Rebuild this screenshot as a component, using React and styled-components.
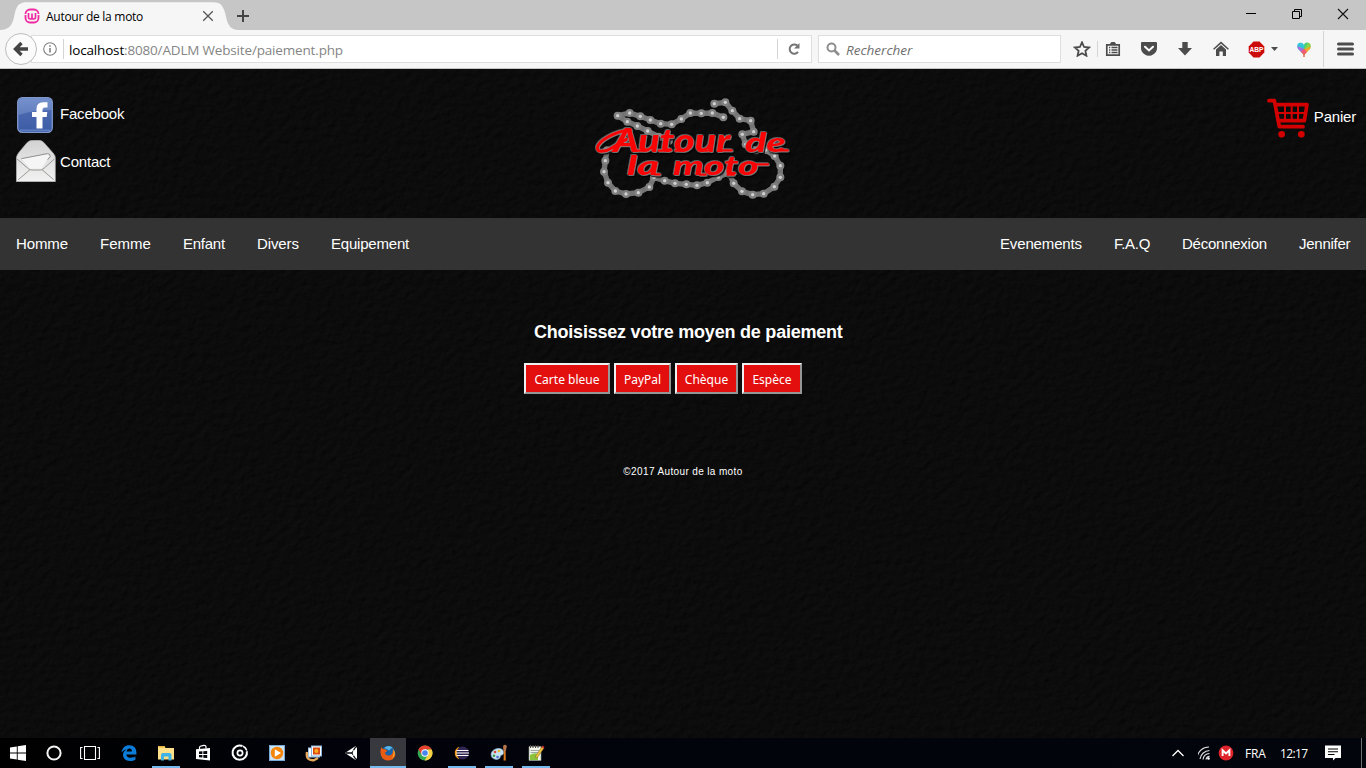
import React from 'react';
import styled, { createGlobalStyle } from 'styled-components';

const GlobalStyle = createGlobalStyle`
  * { box-sizing: border-box; }
  body { margin: 0; background: #0b0b0b; overflow: hidden; }
  svg { display: block; flex: none; }
`;

const ui = `"Open Sans", "Noto Sans", sans-serif`;
const arial = `"Liberation Sans", Arial, sans-serif`;

const Screen = styled.div`
  width: 1366px;
  height: 768px;
  display: flex;
  flex-direction: column;
`;

/* ---------- browser ---------- */
const TabStrip = styled.div`
  height: 30px;
  display: flex;
  background: #c6c6c6;
`;
const Tab = styled.div`
  position: relative;
  width: 236px;
  height: 30px;
  display: flex;
  align-items: center;
  padding: 2px 0 0 24px;
`;
const TabShape = styled.svg`
  position: absolute;
  left: 0;
  top: 0;
`;
const TabTitle = styled.span`
  position: relative;
  width: 155px;
  margin-left: 6px;
  font: 12px ${ui};
  letter-spacing: -0.27px;
  color: #000;
  white-space: nowrap;
`;
const Raised = styled.span`
  position: relative;
  display: block;
`;
const WindowButtons = styled.div`
  display: flex;
  margin-left: auto;
`;
const WindowButton = styled.div`
  width: 46px;
  height: 28px;
  display: flex;
  align-items: center;
  justify-content: center;
`;
const NavBar = styled.div`
  height: 39px;
  display: flex;
  align-items: center;
  background: #f6f6f6;
  border-bottom: 1px solid #c4c4c4;
  padding-left: 5px;
`;
const BackButton = styled.div`
  width: 32px;
  height: 32px;
  border: 1px solid #bdbdbd;
  border-radius: 50%;
  background: #fbfbfb;
  display: flex;
  align-items: center;
  justify-content: center;
  z-index: 1;
`;
const Field = styled.div`
  height: 28px;
  width: ${(p) => p.$width}px;
  margin-left: ${(p) => p.$gap}px;
  padding-left: ${(p) => p.$pad}px;
  display: flex;
  align-items: center;
  background: #fff;
  border: 1px solid #dedede;
`;
const Divider = styled.span`
  width: 1px;
  height: ${(p) => p.$height}px;
  margin: 0 ${(p) => p.$right}px 0 ${(p) => p.$left}px;
  background: #d4d4d4;
`;
const Url = styled.span`
  padding-top: 1px;
  font: 13.5px ${ui};
  letter-spacing: -0.17px;
  color: #858585;
  white-space: nowrap;
  b { font-weight: 400; color: #000; }
`;
const Placeholder = styled.span`
  padding-top: 1px;
  margin-left: 6px;
  font: italic 13.5px ${ui};
  letter-spacing: 0;
  color: #6f6f6f;
`;
const Tools = styled.div`
  flex: 1;
  height: 38px;
  display: flex;
  align-items: center;
  padding-left: 12px;
`;
const Tool = styled.div`
  width: ${(p) => p.$width}px;
  display: flex;
  justify-content: center;
`;

/* ---------- page ---------- */
const Page = styled.main`
  position: relative;
  height: 669px;
  display: flex;
  flex-direction: column;
  font-family: ${arial};
  color: #fff;
`;
const Texture = styled.svg`
  position: absolute;
  inset: 0;
`;
const Header = styled.header`
  position: relative;
  height: 149px;
  display: flex;
`;
const Links = styled.div`
  width: 585px;
  padding: 28px 0 0 16px;
`;
const IconLink = styled.a`
  display: flex;
  align-items: center;
  gap: 4px;
  height: ${(p) => p.$height}px;
  margin-bottom: ${(p) => p.$after || 0}px;
  font-size: 15px;
  line-height: 18px;
  letter-spacing: -0.2px;
  color: #fff;
`;
const LinkText = styled.span`
  padding: ${(p) => p.$down || 0}px 0 ${(p) => p.$up || 0}px;
`;
const LogoBox = styled.div`
  padding-top: 21px;
`;
const LogoWords = styled.g`
  filter: drop-shadow(2.5px 2.5px 0 #9a9a9a) drop-shadow(-2px -2px 0 #8c8c8c) drop-shadow(3px 4px 1px #000);
`;
const Cart = styled.div`
  flex: 1;
  display: flex;
  justify-content: flex-end;
  padding: 28px 10px 0 0;
`;
const Menu = styled.nav`
  position: relative;
  height: 52px;
  display: flex;
  align-items: center;
  padding: 0 16px;
  gap: 32px;
  background: #333;
`;
const MenuItem = styled.a`
  width: ${(p) => p.$width}px;
  font-size: 15px;
  line-height: 22px;
  letter-spacing: ${(p) => p.$spacing || 0}px;
  white-space: nowrap;
`;
const Spacer = styled.span`
  flex: 1;
`;
const Payment = styled.section`
  position: relative;
  padding: 51px 0 0 524px;
`;
const Title = styled.h3`
  margin: 0 0 20px 10px;
  font-size: 18px;
  line-height: 22px;
  height: 22px;
  letter-spacing: -0.22px;
  white-space: nowrap;
`;
const Choices = styled.div`
  display: flex;
  gap: 4px;
`;
const Choice = styled.button`
  width: ${(p) => p.$width}px;
  height: 31px;
  padding: 2px 0 0;
  border: 2px solid;
  border-color: #f0f0f0 #969696 #969696 #f0f0f0;
  background: #e30f0f;
  color: #fff;
  font: 12px "Noto Sans", sans-serif;
  white-space: nowrap;
`;
const Footer = styled.footer`
  position: relative;
  margin-top: 71px;
  text-align: center;
  font-size: 10px;
  line-height: 14px;
  letter-spacing: 0.37px;
`;

/* ---------- taskbar ---------- */
const Taskbar = styled.div`
  height: 30px;
  display: flex;
  background: linear-gradient(90deg, #000 0%, #02030a 25%, #02040b 60%, #03050c 100%);
`;
const Slot = styled.div`
  width: 36px;
  height: 30px;
  margin-right: ${(p) => p.$after || 0}px;
  display: flex;
  align-items: center;
  justify-content: center;
  background: ${(p) => (p.$active ? '#37393e' : 'transparent')};
  box-shadow: ${(p) => (p.$active ? 'inset 0 -2px #76b9ed' : 'none')};
  position: relative;
`;
const Running = styled.span`
  position: absolute;
  left: 4px;
  bottom: 0;
  width: 28px;
  height: 2px;
  background: #76b9ed;
`;
const Tray = styled.div`
  margin-left: auto;
  width: 196px;
  display: flex;
  align-items: center;
  font: 12px ${ui};
  color: #fff;
`;
const TrayText = styled.span`
  width: ${(p) => p.$width}px;
  letter-spacing: ${(p) => p.$spacing}px;
`;
const DesktopEdge = styled.span`
  width: 1px;
  height: 30px;
  margin-left: 19px;
  background: #6b6d70;
`;

const CHAINS = [
  [[415, 82], [382, 69], [349, 70], [316, 69], [289, 87], [260, 103], [227, 101], [196, 90], [166, 79], [134, 69], [98, 77], [127, 95], [157, 108], [188, 123], [221, 140], [252, 152]],
  [[388, 41], [421, 37], [442, 62], [464, 86], [497, 92], [506, 125], [472, 133], [482, 163], [512, 181], [542, 180], [569, 198], [586, 227], [586, 262], [568, 290], [536, 311], [503, 314], [471, 304], [446, 280], [434, 252]],
  [[66, 181], [61, 212], [57, 245], [69, 278], [91, 303], [123, 312], [160, 308], [193, 291], [207, 262], [239, 272], [270, 280], [304, 283], [336, 286], [367, 278], [400, 261], [428, 249]],
];

const Logo = () => (
  <svg width="215" height="120" viewBox="0 0 645 360">
    {CHAINS.map((c, i) => (
      <g key={i}>
        <polyline points={c.join(' ')} fill="none" stroke="#747474" strokeWidth="16" strokeLinejoin="round" />
        {c.map(([x, y]) => (
          <g key={`${x}-${y}`}>
            <circle cx={x} cy={y} r="12" fill="#808080" />
            <circle cx={x} cy={y} r="5" fill="#d0d0d0" />
          </g>
        ))}
      </g>
    ))}
    <LogoWords>
      <text fontFamily="Lato, sans-serif" fontWeight="900" fontStyle="italic" fill="#f80404">
        <tspan x="84" y="185" fontSize="94" textLength="352" lengthAdjust="spacingAndGlyphs">Autour</tspan>
        <tspan x="480" y="185" fontSize="82" textLength="122" lengthAdjust="spacingAndGlyphs">de</tspan>
        <tspan x="126" y="256" fontSize="78" textLength="96" lengthAdjust="spacingAndGlyphs">la</tspan>
        <tspan x="264" y="256" fontSize="78" textLength="256" lengthAdjust="spacingAndGlyphs">moto</tspan>
      </text>
      <path d="M136 119 C90 124 40 152 37 174 C36 188 60 186 76 176 L124 148" fill="none" stroke="#f80404" strokeWidth="9" strokeLinecap="round" />
      <path d="M408 181 H440 M585 181 H608 M505 223 H549 M210 253 H224 M150 182 H172 M222 182 H238 M272 182 H286 M350 182 H366 M345 254 H362 M428 254 H446" fill="none" stroke="#f80404" strokeWidth="7" strokeLinecap="round" />
    </LogoWords>
  </svg>
);

const FacebookIcon = () => (
  <svg width="40" height="36" viewBox="0 0 40 36">
    <defs>
      <linearGradient id="fb" x1="0" y1="0" x2="0" y2="1">
        <stop offset="0" stopColor="#5f7fc4" /><stop offset=".45" stopColor="#4866ae" /><stop offset="1" stopColor="#3c5ca6" />
      </linearGradient>
    </defs>
    <rect x="1.7" y=".7" width="34.6" height="34.6" rx="4.5" fill="url(#fb)" stroke="#8198cc" strokeWidth="1.3" />
    <path d="M2.5 5 Q2.5 1.5 6 1.5 H32 Q35.5 1.5 35.5 5 V13 Q18 13 2.5 18Z" fill="#a9bce6" opacity=".3" />
    <path d="M20.5 31.5 V20 H16 V15 H20.5 V12 Q20.5 5.2 27 5.2 H31.5 V10.4 H29 Q26.5 10.4 26.5 13 V15 H31.3 L30.7 20 H26.5 V31.5Z" fill="#fff" />
    <path d="M4 33.2 H34" stroke="#8ba8df" strokeWidth="1.3" opacity=".5" />
  </svg>
);

const MailIcon = () => (
  <svg width="40" height="42" viewBox="0 0 120 126">
    <defs>
      <linearGradient id="mail" x1="0" y1="0" x2="0" y2="1">
        <stop offset="0" stopColor="#d2d2d2" /><stop offset="1" stopColor="#f2f2f2" />
      </linearGradient>
    </defs>
    <path d="M1 53 Q2 46 8 38 L33 8 Q41 1 50 1 H71 Q78 2 84 8 L112 40 Q118 47 118 54 V125 H1Z" fill="url(#mail)" stroke="#aaa" strokeWidth="2" />
    <path d="M16 56 L94 41 Q101 40 101 48 L76 86 H42Z" fill="#f5f5f5" />
    <path d="M16 56 L94 41 Q101 40 103 49 L95 59" fill="none" stroke="#8e8e8e" strokeWidth="3" />
    <path d="M3 57 L37 86 Q42 90 48 90 H73 Q78 90 84 85 L115 57 M42 89 L7 119 M78 89 L113 119" fill="none" stroke="#999a94" strokeWidth="3" />
  </svg>
);

const CartIcon = () => (
  <svg width="43" height="41" viewBox="0 0 129 123" fill="none" stroke="#d40000" strokeLinejoin="round" strokeLinecap="round">
    <path d="M6 11 H22 L37 89 H108" strokeWidth="11" />
    <path d="M26 23 H120 L112 71 H34" strokeWidth="11" />
    <path d="M30 48 H114 M54 24 V70 M74 24 V70 M93 24 V70" strokeWidth="6" />
    <circle cx="44" cy="112" r="10" fill="#d40000" stroke="none" />
    <circle cx="103" cy="112" r="10" fill="#d40000" stroke="none" />
  </svg>
);

const g = '#4c4c4c';
const Ico = ({ w = 16, h = 16, children, ...rest }) => (
  <svg width={w} height={h} viewBox={`0 0 ${w} ${h}`} fill="none" {...rest}>{children}</svg>
);

const taskIcons = {
  windows: <path d="M2 4.4 8.8 3.4V9.5H2ZM9.7 3.3 18 2V9.5H9.7ZM2 10.5H8.8V16.6L2 15.6ZM9.7 10.5H18V18L9.7 16.7Z" fill="#fff" />,
  cortana: <circle cx="10" cy="10" r="6.6" stroke="#f4f4f4" strokeWidth="2" />,
  tasks: <path d="M4.5 3.5H15.5V16.5H4.5ZM2.6 4.5H.6V15.5H2.6M17.4 4.5H19.4V15.5H17.4" stroke="#fff" strokeWidth="1.1" />,
  edge: <path d="M2.5 9.4C3.2 4.8 6.2 2.2 10.3 2.2C15 2.2 17.4 5.4 17.4 9.3V11.5H7.3C7.6 14 9.4 14.8 11.8 14.8C13.6 14.8 15 14.4 16.4 13.6V16.8C15 17.6 13.2 18 11.1 18C6.6 18 4 15.4 4 11.8C4 9.3 5.3 7.5 7.4 6.4C5.4 6.7 3.7 7.8 2.5 9.4ZM7.6 8.6H12.9C12.9 6.7 12 5.6 10.4 5.6C8.9 5.6 7.9 6.8 7.6 8.6Z" fill="#0c7cd9" />,
  explorer: <><path d="M2 3H8.5L9.5 5H18V16.5H2Z" fill="#ffe08a" /><path d="M2 3H8.5L9.2 4.5H3Z" fill="#e9b43c" /><path d="M5 17.5V12Q5 10 7 10H13.5Q15.5 10 15.5 12V17.5H12.5V13.5H8V17.5Z" fill="#3fb3e6" /></>,
  store: <><path d="M3 6.3 17 5V17.5L3 16Z" fill="#fff" /><path d="M6.5 6V4.5Q6.5 3 8.5 2.8L11 2.3Q13 2.2 13 4V5.5" stroke="#fff" strokeWidth="1.2" /><path d="M6 8.6 9.4 8.3V11H6ZM10.3 8.2 14.2 7.9V11H10.3ZM6 11.9H9.4V14.6L6 14.2ZM10.3 11.9H14.2V15.1L10.3 14.7Z" fill="#05060a" /></>,
  groove: <><path d="M12.5 3A7.2 7.2 0 1 0 16.8 8.2" stroke="#fff" strokeWidth="2" /><circle cx="10" cy="10" r="2.6" stroke="#fff" strokeWidth="1.7" /><path d="M13 3.2Q15.7 4.4 16.8 7.5" stroke="#fff" strokeWidth="1.6" /></>,
  wmp: <><rect x="2.5" y="2.5" width="15" height="15" fill="#cde2f3" stroke="#75a9d8" /><circle cx="10" cy="10" r="6.2" fill="#f4860b" /><path d="M7.8 6.3V13.7L14 10Z" fill="#fff" /></>,
  photos: <><path d="M3 9Q1.5 18 10 17.2L14 15" stroke="#e7a85b" strokeWidth="2.4" /><rect x="4.5" y="5" width="11" height="9" fill="#fff" stroke="#9fc4e3" /><rect x="7.5" y="3" width="10" height="10" fill="#fff" stroke="#88b5e0" /><rect x="9" y="4.5" width="7" height="7" fill="#d94b13" /><circle cx="12.4" cy="8" r="2" fill="#ffad20" /></>,
  unity: <><path d="M4 10 14.2 3.2 16 5V15L14.2 16.8Z" fill="#fff" /><path d="M10.8 10H4.8M10.8 10 14.6 4M10.8 10 14.6 16" stroke="#030408" strokeWidth="1.3" /><path d="M9 8.4 12.6 7.5V12.5L9 11.6" stroke="#fff" strokeWidth=".8" /></>,
  firefox: <><circle cx="10.2" cy="10" r="7.1" fill="#1762a8" /><path d="M6 5Q11 1 15 5Q12 5 11.7 7.5Z" fill="#56b5e4" /><path d="M3.2 4.2 5 6Q7.5 5.5 9.5 8L7 9.5Q7.6 13 11 12.5Q15.5 12 14.8 6.2Q20 12 14.4 16.4Q9 19 4.6 15.5Q1.2 11 3.2 4.2Z" fill="#e75b12" /><path d="M15 5.5Q19 12 13.5 16Q17 12 15 5.5Z" fill="#ffc82d" /></>,
  chrome: <><circle cx="10" cy="10" r="7.4" fill="#34a853" /><path d="M3.4 6.6A7.4 7.4 0 0 1 16.7 6.6H10L6.8 11.8Z" fill="#e5402f" /><path d="M16.7 6.6A7.4 7.4 0 0 1 9.6 17.4L13.2 11.7 12.8 6.6Z" fill="#fdd042" /><circle cx="10" cy="10" r="3.7" fill="#fff" /><circle cx="10" cy="10" r="2.8" fill="#4384ee" /></>,
  eclipse: <><circle cx="10.6" cy="10" r="6.4" fill="#302553" /><path d="M7.5 3.5Q2.5 6 2.8 10Q2.5 14 7.5 16.5Q4.8 13.5 4.8 10Q4.8 6.5 7.5 3.5Z" fill="#f39a1c" /><path d="M4.5 7.5H16.5M4.2 10H17M4.5 12.5H16.5" stroke="#fff" strokeWidth="1.1" /></>,
  paint: <><path d="M9 5.5C13 5.2 15 7.5 14.5 10.5C14 12.5 11.5 11.5 11.3 13.5C11 16.8 6 17.4 3.2 14.6C.6 11 3 6 9 5.5Z" fill="#c7e3f1" stroke="#8bb8d3" strokeWidth=".7" /><circle cx="6" cy="9" r="1.3" fill="#db4636" /><circle cx="10" cy="8" r="1.3" fill="#e7b929" /><circle cx="5" cy="12.7" r="1.3" fill="#3e9d4c" /><circle cx="8.5" cy="14" r="1.3" fill="#4b6fd0" /><path d="M14.8 8 14.6 17.5H16.8L16.6 8" fill="#df7a1d" /><path d="M14 3Q16.3 .5 17.8 3.2L16.9 8H14.5Z" fill="#b5744a" /></>,
  notepad: <><path d="M3 3.5H15V17.5H3Z" fill="#f3f3e9" stroke="#8f9c8c" strokeWidth=".6" /><path d="M4.5 2V5M7 2V5M9.5 2V5M12 2V5" stroke="#4a4a4a" /><path d="M4.5 7.5H13M4.5 9.5H12" stroke="#9aa" /><path d="M4 17V12Q8 9 12 11V17Z" fill="#8ac43f" /><path d="M9 14 16 3.5 18 5 11 15Z" fill="#edc43e" stroke="#7f5b1d" strokeWidth=".5" /><path d="M15.5 4.2 16.6 2.8 18.5 4 17.5 5.6Z" fill="#d33" /></>,
};

const slots = [
  { icon: 'windows' }, { icon: 'cortana' }, { icon: 'tasks', after: 3 },
  { icon: 'edge' }, { icon: 'explorer', running: true }, { icon: 'store' }, { icon: 'groove' },
  { icon: 'wmp' }, { icon: 'photos' }, { icon: 'unity' }, { icon: 'firefox', active: true },
  { icon: 'chrome' }, { icon: 'eclipse', running: true }, { icon: 'paint', running: true }, { icon: 'notepad', running: true },
];

const leftMenu = [
  { text: 'Homme', width: 52, spacing: -0.1 },
  { text: 'Femme', width: 51 },
  { text: 'Enfant', width: 42, spacing: -0.25 },
  { text: 'Divers', width: 42, spacing: -0.1 },
  { text: 'Equipement', width: 78, spacing: -0.2 },
];
const rightMenu = [
  { text: 'Evenements', width: 82, spacing: -0.15 },
  { text: 'F.A.Q', width: 36, spacing: -0.3 },
  { text: 'Déconnexion', width: 85, spacing: -0.24 },
  { text: 'Jennifer', width: 51, spacing: -0.25 },
];
const MenuGroup = ({ items }) => items.map((m) => (
  <MenuItem key={m.text} $width={m.width} $spacing={m.spacing}>{m.text}</MenuItem>
));

export default function App() {
  return (
    <Screen>
      <GlobalStyle />
      <TabStrip>
        <Tab>
          <TabShape width="240" height="30" viewBox="0 0 720 90">
            <path d="M0 90 C28 90 38 75 44 42 C50 14 60 7 82 7 H640 C662 7 670 18 676 42 C682 70 688 90 716 90Z" fill="#f6f6f6" />
          </TabShape>
          <Raised>
            <Ico>
              <rect x="1.5" y="1.5" width="13" height="13" rx="4.5" stroke="#f02ba0" strokeWidth="1.8" />
              <path d="M4.5 5V9.5Q4.5 11 6.2 11Q8 11 8 9.5V5.5V9.5Q8 11 9.8 11Q11.5 11 11.5 9.5V5" stroke="#f02ba0" strokeWidth="1.7" />
              <path d="M0 6.5H3M13 6.5H16" stroke="#f6f6f6" strokeWidth="1" />
            </Ico>
          </Raised>
          <TabTitle>Autour de la moto</TabTitle>
          <Raised>
            <Ico w={14} h={14}><path d="M2.2 2.2 11.8 11.8M11.8 2.2 2.2 11.8" stroke="#555" strokeWidth="1.3" /></Ico>
          </Raised>
        </Tab>
        <Ico w={14} h={32}><path d="M7 10V22M1 16H13" stroke="#444" strokeWidth="2" /></Ico>
        <WindowButtons>
          <WindowButton><Ico w={12} h={12}><path d="M1 5.5H11" stroke="#000" /></Ico></WindowButton>
          <WindowButton><Ico w={12} h={12}><path d="M1.5 3.5H8.5V10.5H1.5ZM3.5 3V1.5H10.5V8.5H9" stroke="#000" /></Ico></WindowButton>
          <WindowButton><Ico w={12} h={12}><path d="M1 1 11 11M11 1 1 11" stroke="#111" strokeWidth="1.1" /></Ico></WindowButton>
        </WindowButtons>
      </TabStrip>
      <NavBar>
        <BackButton>
          <Ico><path d="M8.5 2 2.5 8 8.5 14M3 8H15" stroke="#444" strokeWidth="3.4" strokeLinejoin="miter" /></Ico>
        </BackButton>
        <Field $width={781} $gap={-6} $pad={11}>
          <Ico w={14} h={14}><circle cx="7" cy="7" r="6.3" stroke="#808080" strokeWidth="1.1" /><path d="M7 6V10.5M7 3.2V4.8" stroke="#808080" strokeWidth="1.6" /></Ico>
          <Divider $height={20} $left={6} $right={5} />
          <Url><b>localhost</b>:8080/ADLM Website/paiement.php</Url>
          <Spacer />
          <Divider $height={20} $left={0} $right={9} />
          <Ico w={14} h={14}><path d="M11 9.8A4.6 4.6 0 1 1 10.3 3.6" stroke="#757575" strokeWidth="2" /><path d="M12.5 1V6.5H7Z" fill="#757575" /></Ico>
          <Divider $height={0} $left={0} $right={9} />
        </Field>
        <Field $width={243} $gap={6} $pad={7}>
          <Ico w={14} h={15}><circle cx="5.5" cy="5.5" r="4" stroke="#8e8e8e" strokeWidth="2" /><path d="M8.5 8.5 13 13" stroke="#8e8e8e" strokeWidth="2.6" /></Ico>
          <Placeholder>Rechercher</Placeholder>
        </Field>
        <Tools>
          <Tool $width={18}><Ico w={18} h={16}><path d="M9 1.3 11.1 6 16 6.5 12.4 9.8 13.4 14.7 9 12.2 4.6 14.7 5.6 9.8 2 6.5 6.9 6Z" stroke={g} strokeWidth="1.8" /></Ico></Tool>
          <Divider $height={16} $left={6} $right={0} />
          <Tool $width={30}><Ico><path d="M1.8 3.8H14.2V14.2H1.8Z" stroke={g} strokeWidth="1.7" /><path d="M5 4V2.5L6.5 1H9.5L11 2.5V4Z" fill={g} /><path d="M4 6.5H5.3M6.5 6.5H12.5M4 9H5.3M6.5 9H12.5M4 11.5H5.3M6.5 11.5H12.5" stroke={g} strokeWidth="1.3" /></Ico></Tool>
          <Tool $width={42}><Ico><path d="M0 2Q0 1 1 1H15Q16 1 16 2V7Q16 11 12.5 13.2Q8 16.5 3.5 13.2Q0 11 0 7Z" fill={g} /><path d="M4 5.8 8 9.5 12 5.8" stroke="#fff" strokeWidth="2" strokeLinecap="round" /></Ico></Tool>
          <Tool $width={30}><Ico><path d="M5.3 1H10.7V7H15L8 14.5 1 7H5.3Z" fill={g} /></Ico></Tool>
          <Tool $width={42}><Ico><path d="M.6 8.3 8 1.6 15.4 8.3" stroke={g} strokeWidth="1.5" /><path d="M3 8.4 8 4 13 8.4V15H9.8V10.5H6.4V15H3Z" fill={g} /></Ico></Tool>
          <Tool $width={29}>
            <Ico w={17} h={17}>
              <path d="M5.5 .5H11.5L16.3 5.5V11.5L11.5 16.5H5.5L.7 11.5V5.5Z" fill="#cc0a0a" />
              <text x="1.5" y="11.3" fontSize="7.5" fontWeight="700" fontFamily="Liberation Sans" fill="#fff" textLength="14" lengthAdjust="spacingAndGlyphs">ABP</text>
            </Ico>
          </Tool>
          <Ico w={8} h={6}><path d="M0 1H7L3.5 5Z" fill={g} /></Ico>
          <Tool $width={50}>
            <Ico w={16} h={17}>
              <path d="M8 14 1.8 7.5Q0 3 3.5 1.8Q7 1 8 4Z" fill="#35c6d6" />
              <path d="M8 4Q9 1 12.5 1.8Q16 3 14.2 7.5L8 14Z" fill="#8ad34b" />
              <path d="M8 4Q9 1 12 1.7L8 8Z" fill="#3fcf86" /><path d="M14.8 5.5 14.2 7.5 8 14V8.5Z" fill="#f5a62b" />
              <path d="M8 14 4.5 10.4 8 7.5 11 11Z" fill="#f25c77" /><path d="M1.4 5 8 8 4.5 10.4Q1 7.5 1.4 5Z" fill="#a073e0" />
              <path d="M8 12V16" stroke="#e66a4b" strokeWidth="1.5" />
            </Ico>
          </Tool>
          <Divider $height={36} $left={-6} $right={13} />
          <Ico w={17} h={16}><path d="M1.5 3H15.5M1.5 8H15.5M1.5 13H15.5" stroke={g} strokeWidth="3" strokeLinecap="round" /></Ico>
        </Tools>
      </NavBar>

      <Page>
        <Texture width="1366" height="669">
          <filter id="leather" x="0" y="0" width="100%" height="100%" colorInterpolationFilters="sRGB">
            <feTurbulence type="fractalNoise" baseFrequency="0.13 0.15" numOctaves="4" seed="7" />
            <feColorMatrix values="0 0 0 0 0  0 0 0 0 0  0 0 0 0 0  1 0 0 0 0" />
            <feDiffuseLighting surfaceScale="1.3" lightingColor="#101010">
              <feDistantLight azimuth="225" elevation="48" />
            </feDiffuseLighting>
          </filter>
          <rect width="1366" height="669" filter="url(#leather)" />
        </Texture>
        <Header>
          <Links>
            <IconLink $height={36} $after={7}><FacebookIcon /><LinkText $up={2}>Facebook</LinkText></IconLink>
            <IconLink $height={42}><MailIcon /><LinkText $down={2}>Contact</LinkText></IconLink>
          </Links>
          <LogoBox><Logo /></LogoBox>
          <Cart><IconLink $height={41}><CartIcon /><LinkText $up={2}>Panier</LinkText></IconLink></Cart>
        </Header>
        <Menu>
          <MenuGroup items={leftMenu} />
          <Spacer />
          <MenuGroup items={rightMenu} />
        </Menu>
        <Payment>
          <Title>Choisissez votre moyen de paiement</Title>
          <Choices>
            <Choice $width={86}>Carte bleue</Choice>
            <Choice $width={57}>PayPal</Choice>
            <Choice $width={63}>Chèque</Choice>
            <Choice $width={60}>Espèce</Choice>
          </Choices>
        </Payment>
        <Footer>©2017 Autour de la moto</Footer>
      </Page>

      <Taskbar>
        {slots.map((s, i) => (
          <Slot key={s.icon} $active={s.active} $after={s.after ?? (i > 2 ? 1 : 0)}>
            <Ico w={20} h={20}>{taskIcons[s.icon]}</Ico>
            {s.running && <Running />}
          </Slot>
        ))}
        <Tray>
          <Ico w={28} h={20}><path d="M2.5 13 8 7.5 13.5 13" stroke="#fff" strokeWidth="1.3" /></Ico>
          <Ico w={20} h={20}>
            <path d="M-1 15A12 12 0 0 1 11 4M2 16A10 10 0 0 1 11.5 7.5M5 16.5A7 7 0 0 1 11.5 10.5M8 16.5A4 4 0 0 1 11.5 13.3" stroke="#ddd" strokeWidth="1.2" />
            <circle cx="10.5" cy="15.5" r="1.3" fill="#fff" />
          </Ico>
          <Ico w={27} h={20}><circle cx="8" cy="10" r="7.4" fill="#e0242c" /><path d="M4.6 13V7.2L8 10.4 11.4 7.2V13" stroke="#fff" strokeWidth="1.9" /></Ico>
          <TrayText $width={35} $spacing={-0.2}>FRA</TrayText>
          <TrayText $width={44} $spacing={-0.6}>12:17</TrayText>
          <Ico w={18} h={20}><path d="M1 2.5H17V15H11.5L9 17.5V15H1Z" fill="#fff" /><path d="M4 6H14M4 8.8H14M4 11.5H10.5" stroke="#000" strokeWidth="1.1" /></Ico>
          <DesktopEdge />
        </Tray>
      </Taskbar>
    </Screen>
  );
}
